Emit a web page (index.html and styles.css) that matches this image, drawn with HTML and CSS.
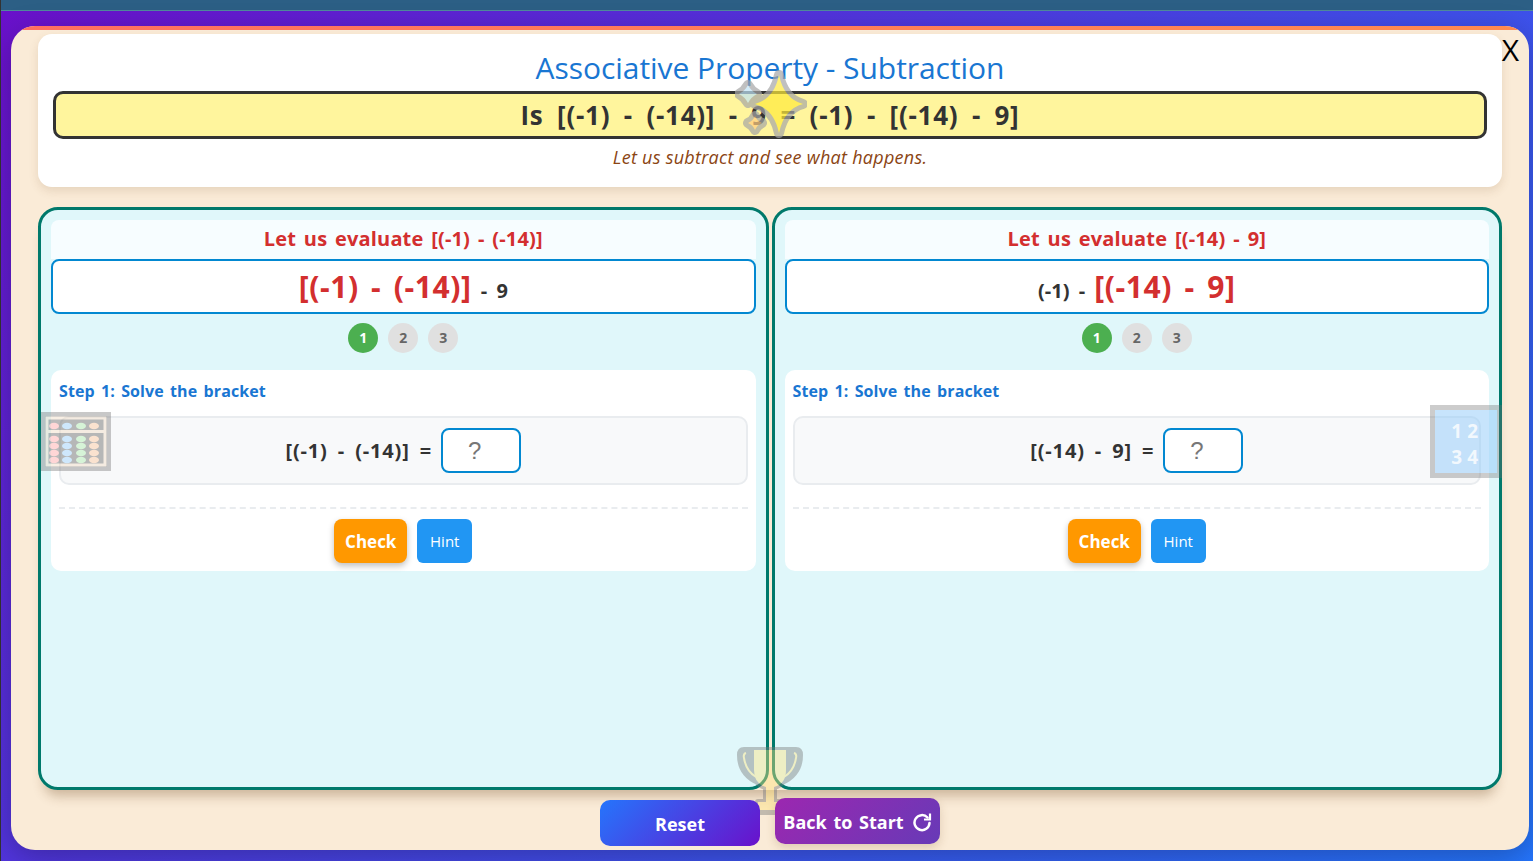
FILE: index.html
```html
<!DOCTYPE html>
<html lang="en">
  <head>
    <meta charset="UTF-8" />
    <meta name="viewport" content="width=device-width, initial-scale=1.0" />
    <title>Associative Property - Subtraction</title>
    <link rel="stylesheet" href="styles.css">
  </head>
  <body>
    <div class="top-bar"></div>
    <div class="stage">
      <main class="modal">
        <div class="stripe"></div>
        <span class="close">X</span>

        <!-- Floating decorations -->
        <svg class="deco deco-sparkle" viewBox="0 0 72 70">
          <g stroke="#a6a6a6" stroke-width="10" stroke-linejoin="round" paint-order="stroke">
            <path d="M13 15 Q16 21 22 24 Q16 27 13 33 Q10 27 4 24 Q10 21 13 15Z" fill="#bfe3f5" />
            <path d="M44 5 Q49 29 68 34 Q49 39 44 63 Q39 39 20 34 Q39 29 44 5Z" fill="#ffeb3b" />
            <path d="M20 46 Q22 51 27 53 Q22 55 20 60 Q18 55 13 53 Q18 51 20 46Z" fill="#ffcc80" />
          </g>
        </svg>
        <svg class="deco deco-abacus" viewBox="0 0 70 59">
          <rect x="2" y="2" width="66" height="55" fill="#555" stroke="#777" stroke-width="4" />
          <rect x="6" y="6" width="58" height="47" fill="none" stroke="#f0d8bc" stroke-width="3" />
          <rect x="6" y="18" width="58" height="3" fill="#f0d8bc" />
          <g fill="#ff9a9a"><ellipse cx="13" cy="14" rx="5" ry="3.2" /><ellipse cx="13" cy="27" rx="5" ry="3.2" /><ellipse cx="13" cy="34" rx="5" ry="3.2" /><ellipse cx="13" cy="41" rx="5" ry="3.2" /><ellipse cx="13" cy="48" rx="5" ry="3.2" /></g>
          <g fill="#90ceff"><ellipse cx="26" cy="14" rx="5" ry="3.2" /><ellipse cx="26" cy="27" rx="5" ry="3.2" /><ellipse cx="26" cy="34" rx="5" ry="3.2" /><ellipse cx="26" cy="41" rx="5" ry="3.2" /><ellipse cx="26" cy="48" rx="5" ry="3.2" /></g>
          <g fill="#a5eca5"><ellipse cx="40" cy="14" rx="5" ry="3.2" /><ellipse cx="40" cy="27" rx="5" ry="3.2" /><ellipse cx="40" cy="34" rx="5" ry="3.2" /><ellipse cx="40" cy="41" rx="5" ry="3.2" /><ellipse cx="40" cy="48" rx="5" ry="3.2" /></g>
          <g fill="#ffc090"><ellipse cx="53" cy="14" rx="5" ry="3.2" /><ellipse cx="53" cy="27" rx="5" ry="3.2" /><ellipse cx="53" cy="34" rx="5" ry="3.2" /><ellipse cx="53" cy="41" rx="5" ry="3.2" /><ellipse cx="53" cy="48" rx="5" ry="3.2" /></g>
        </svg>
        <div class="deco deco-numbers"><span>1 2</span><span>3 4</span></div>
        <svg class="deco deco-trophy" viewBox="0 0 70 72">
          <path d="M18 6 H8 Q4 6 4 11 Q4 30 22 38 M50 6 H60 Q64 6 64 11 Q64 30 46 38 M18 6 H50 V26 Q50 40 38 43 V58 H46 V68 H22 V58 H30 V43 Q18 40 18 26Z" fill="#777" stroke="#777" stroke-width="6" stroke-linejoin="round" stroke-linecap="round" />
          <path d="M18 6 H50 V26 Q50 40 38 43 V58 H46 V66 H22 V58 H30 V43 Q18 40 18 26Z" fill="#ffe27a" />
          <path d="M10 9 Q7 10 8 14 Q10 27 20 33 M58 9 Q61 10 60 14 Q58 27 48 33" fill="none" stroke="#ffe27a" stroke-width="2" />
        </svg>

        <!-- Header -->
        <header class="card-head">
          <h1>Associative Property - Subtraction</h1>
          <div class="question">Is [(-1) - (-14)] - 9 = (-1) - [(-14) - 9]</div>
          <p class="subtitle">Let us subtract and see what happens.</p>
        </header>

        <!-- Two sides -->
        <section class="panels">
          <div class="panel">
            <div class="panel-title">Let us evaluate [(-1) - (-14)]</div>
            <div class="expr"><span class="expr-hi">[(-1) - (-14)]</span> - 9</div>
            <div class="steps">
              <span class="step active">1</span>
              <span class="step">2</span>
              <span class="step">3</span>
            </div>
            <div class="work">
              <div class="work-title">Step 1: Solve the bracket</div>
              <div class="equation">
                <span>[(-1) - (-14)] =</span>
                <input class="answer" placeholder="?" />
              </div>
              <div class="actions">
                <button class="btn-check">Check</button>
                <button class="btn-hint">Hint</button>
              </div>
            </div>
          </div>

          <div class="panel">
            <div class="panel-title">Let us evaluate [(-14) - 9]</div>
            <div class="expr">(-1) - <span class="expr-hi">[(-14) - 9]</span></div>
            <div class="steps">
              <span class="step active">1</span>
              <span class="step">2</span>
              <span class="step">3</span>
            </div>
            <div class="work">
              <div class="work-title">Step 1: Solve the bracket</div>
              <div class="equation">
                <span>[(-14) - 9] =</span>
                <input class="answer" placeholder="?" />
              </div>
              <div class="actions">
                <button class="btn-check">Check</button>
                <button class="btn-hint">Hint</button>
              </div>
            </div>
          </div>
        </section>

        <!-- Bottom buttons -->
        <footer class="bottom">
          <button class="btn-reset">Reset</button>
          <button class="btn-back">Back to Start
            <svg viewBox="0 0 20 20" width="20" height="20"><path d="M15.5 5.5 A7.5 7.5 0 1 0 17.5 11" fill="none" stroke="#fff" stroke-width="2.5" stroke-linecap="round" /><path d="M18 1.5 V7.5 H12" fill="none" stroke="#fff" stroke-width="2.2" /></svg>
          </button>
        </footer>
      </main>
    </div>
  </body>
</html>
```

FILE: styles.css
```css
* {
  box-sizing: border-box;
}

body {
  margin: 0;
  height: 861px;
  overflow: hidden;
  display: flex;
  flex-direction: column;
  font-family: "Open Sans", "DejaVu Sans", sans-serif;
  background: #333;
}

button,
input {
  font-family: inherit;
}

.top-bar {
  height: 11px;
  margin-left: 1px;
  background: #2c5f85;
  border-bottom: 1px solid #4f8a9c;
}

/* Background behind the modal */
.stage {
  flex: 1;
  margin-left: 1px;
  padding: 15px 4px 11px 10px;
  display: flex;
  background: linear-gradient(135deg, #6a11cb 0%, #2575fc 100%);
}

.modal {
  position: relative;
  flex: 1;
  display: flex;
  flex-direction: column;
  padding: 0 27px;
  border-radius: 24px;
  overflow: hidden;
  background: #faebd7;
  box-shadow: 0 8px 30px rgba(0, 0, 0, 0.25);
}

.stripe {
  height: 4px;
  margin: 0 -27px 4px;
  background: linear-gradient(90deg, #ff6f61, #ff8a50);
}

.close {
  position: absolute;
  top: 6px;
  right: 10px;
  font-size: 30px;
  line-height: 36px;
  color: #000;
}

/* Decorations */
.deco {
  position: absolute;
  z-index: 3;
  pointer-events: none;
}

.deco-sparkle {
  left: 724px;
  top: 44px;
  width: 72px;
  height: 70px;
  opacity: 0.7;
}

.deco-abacus {
  left: 30px;
  top: 386px;
  width: 70px;
  height: 59px;
  opacity: 0.4;
}

.deco-numbers {
  left: 1419px;
  top: 379px;
  width: 72px;
  height: 73px;
  padding: 8px 19px 0 0;
  display: flex;
  flex-direction: column;
  align-items: flex-end;
  font-size: 19px;
  line-height: 26px;
  font-weight: 700;
  color: rgba(255, 255, 255, 0.8);
  background: rgba(144, 202, 249, 0.5);
  background-clip: padding-box;
  border: 5px solid rgba(110, 110, 110, 0.35);
}

.deco-trophy {
  left: 725px;
  top: 718px;
  width: 70px;
  height: 72px;
  opacity: 0.42;
}

/* Header */
.card-head {
  height: 153px;
  padding: 14px 15px 0;
  background: #fff;
  border-radius: 14px;
  text-align: center;
  box-shadow: 0 4px 10px rgba(120, 80, 40, 0.15);
}

h1 {
  margin: 0;
  font-size: 30px;
  line-height: 40px;
  font-weight: 400;
  letter-spacing: -0.06px;
  color: #1976d2;
}

.question {
  height: 48px;
  margin-top: 3px;
  font-size: 26px;
  line-height: 42px;
  font-weight: 700;
  letter-spacing: 0.75px;
  word-spacing: 6px;
  color: #333;
  background: #fff59d;
  border: 3px solid #333;
  border-radius: 10px;
}

.subtitle {
  margin: 7px 0 0;
  font-size: 18px;
  line-height: 22px;
  font-style: italic;
  letter-spacing: 0.27px;
  color: #8b4513;
}

/* Panels */
.panels {
  display: grid;
  grid-template-columns: 1fr 1fr;
  gap: 3px;
  height: 583px;
  margin-top: 20px;
  box-shadow: 0 12px 12px -6px rgba(100, 60, 20, 0.3);
  border-radius: 20px;
}

.panel {
  padding: 10px;
  background: #e0f7fa;
  border: 3px solid #00796b;
  border-radius: 20px;
}

.panel-title {
  height: 39px;
  font-size: 20px;
  line-height: 37px;
  font-weight: 700;
  letter-spacing: 0.15px;
  word-spacing: 2.5px;
  text-align: center;
  color: #d32f2f;
  background: #f7fdff;
  border-radius: 8px 8px 0 0;
}

.expr {
  height: 55px;
  font-size: 20px;
  line-height: 51px;
  font-weight: 700;
  word-spacing: 4px;
  text-align: center;
  color: #333;
  background: #fff;
  border: 2px solid #0288d1;
  border-radius: 8px;
}

.expr-hi {
  font-size: 30px;
  letter-spacing: 0.6px;
  color: #d32f2f;
}

.steps {
  display: flex;
  justify-content: center;
  gap: 10px;
  margin: 9px 0 17px;
}

.step {
  width: 30px;
  height: 30px;
  font-size: 14px;
  line-height: 30px;
  font-weight: 700;
  text-align: center;
  color: #666;
  background: #e0e0e0;
  border-radius: 50%;
}

.step.active {
  color: #fff;
  background: #4caf50;
}

.work {
  height: 201px;
  padding: 11px 8px 0;
  background: #fff;
  border-radius: 10px;
}

.work-title {
  height: 35px;
  font-size: 16px;
  line-height: 20px;
  font-weight: 700;
  letter-spacing: 0.1px;
  word-spacing: 2px;
  color: #1976d2;
}

.equation {
  height: 69px;
  display: flex;
  justify-content: center;
  align-items: center;
  gap: 9px;
  font-size: 20px;
  font-weight: 700;
  letter-spacing: 0.85px;
  word-spacing: 4px;
  color: #333;
  background: #f8f9fa;
  border: 2px solid #e9ecef;
  border-radius: 10px;
}

.answer {
  width: 80px;
  height: 45px;
  padding: 0 0 0 25px;
  font-family: "Liberation Sans", sans-serif;
  font-size: 24px;
  background: #fff;
  border: 2px solid #0288d1;
  border-radius: 8px;
}

.answer::placeholder {
  color: #777;
}

.actions {
  display: flex;
  justify-content: center;
  gap: 10px;
  margin-top: 22px;
  padding-top: 10px;
  border-top: 2px dashed #e9ecef;
}

.btn-check {
  width: 73px;
  height: 44px;
  padding: 0;
  font-size: 17px;
  font-weight: 700;
  color: #fff;
  background: #ff9800;
  border: 0;
  border-radius: 8px;
  box-shadow: 0 3px 6px rgba(0, 0, 0, 0.25);
}

.btn-hint {
  width: 55px;
  height: 44px;
  padding: 0;
  font-size: 15px;
  color: #fff;
  background: #2196f3;
  border: 0;
  border-radius: 6px;
}

/* Bottom buttons */
.bottom {
  position: relative;
  z-index: 4;
  display: flex;
  justify-content: center;
  align-items: flex-start;
  gap: 15px;
  margin-top: 8px;
}

.bottom button {
  height: 46px;
  padding: 2px 0 0;
  font-size: 18px;
  font-weight: 700;
  word-spacing: 2px;
  color: #fff;
  border: 0;
  border-radius: 10px;
}

.btn-reset {
  width: 160px;
  margin-top: 2px;
  background: linear-gradient(135deg, #2575fc, #6a11cb);
}

.btn-back {
  width: 165px;
  display: flex;
  align-items: center;
  justify-content: center;
  gap: 8px;
  background: linear-gradient(135deg, #9c27b0, #673ab7);
  box-shadow: 0 4px 10px rgba(120, 80, 40, 0.2);
}
```
